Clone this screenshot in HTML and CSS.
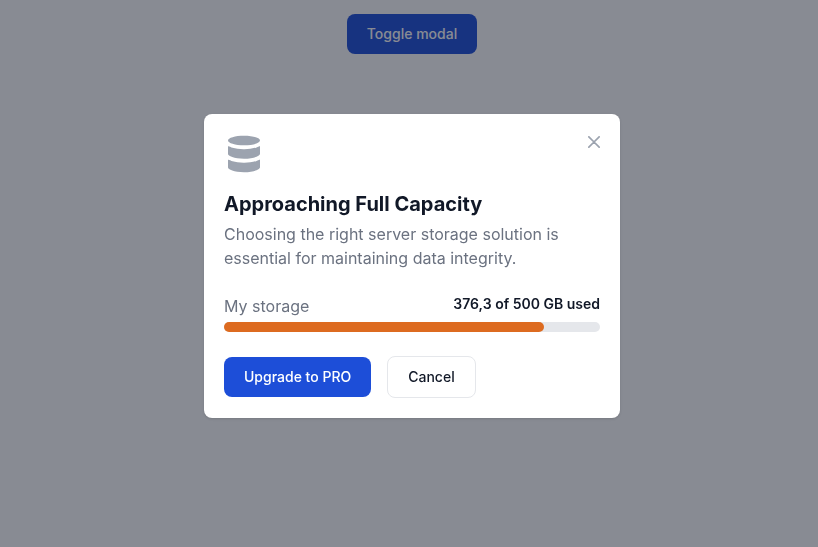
FILE: index.html
```html
<!DOCTYPE html>
<html lang="en">
<head>
<meta charset="utf-8">
<title>Storage modal</title>
<link rel="stylesheet" href="styles.css">
</head>
<body>
<main class="page">
  <button class="btn btn-primary" type="button">Toggle modal</button>
</main>
<div class="backdrop">
  <section class="modal" role="dialog" aria-labelledby="modal-title">
    <button class="close" type="button" aria-label="Close">
      <svg width="12" height="12" viewBox="0 0 14 14" fill="none" stroke="currentColor" stroke-width="2" stroke-linecap="round" stroke-linejoin="round"><path d="m1 1 6 6m0 0 6 6M7 7l6-6M7 7l-6 6"/></svg>
    </button>
    <svg class="icon" viewBox="0 0 16 20" fill="currentColor"><path d="M8 5.625c4.418 0 8-1.063 8-2.375S12.418.875 8 .875 0 1.938 0 3.25s3.582 2.375 8 2.375Zm0 13.5c4.963 0 8-1.538 8-2.375v-4.019c-.052.029-.112.054-.165.082a8.08 8.08 0 0 1-.745.353c-.193.081-.394.158-.6.231l-.189.067c-2.04.628-4.165.936-6.3.911a20.601 20.601 0 0 1-6.3-.911l-.189-.067a10.719 10.719 0 0 1-.852-.34 8.08 8.08 0 0 1-.493-.244c-.053-.028-.113-.053-.165-.082v4.019C0 17.587 3.037 19.125 8 19.125Zm7.09-12.709c-.193.081-.394.158-.6.231l-.189.067a20.6 20.6 0 0 1-6.3.911 20.6 20.6 0 0 1-6.3-.911l-.189-.067a10.719 10.719 0 0 1-.852-.34 8.08 8.08 0 0 1-.493-.244C.112 6.035.052 6.01 0 5.981V10c0 .837 3.037 2.375 8 2.375s8-1.538 8-2.375V5.981c-.052.029-.112.054-.165.082a8.08 8.08 0 0 1-.745.353Z"/></svg>
    <h2 class="title" id="modal-title">Approaching Full Capacity</h2>
    <p class="text">Choosing the right server storage solution is essential for maintaining data integrity.</p>
    <div class="usage">
      <span class="usage-name">My storage</span>
      <span class="usage-value">376,3 of 500 GB used</span>
    </div>
    <div class="track"><div class="bar" style="width:85%"></div></div>
    <div class="actions">
      <button class="btn btn-primary" type="button">Upgrade to PRO</button>
      <button class="btn btn-light" type="button">Cancel</button>
    </div>
  </section>
</div>
</body>
</html>
```
FILE: styles.css
```css
* { box-sizing: border-box; margin: 0; }
body {
  font: 400 16px/24px Inter, sans-serif;
  color: #6b7280;
  background: #fff;
}
.page {
  display: flex;
  justify-content: center;
  padding: 14px 0 0 6px;
}
.btn {
  font: 500 14px/20px Inter, sans-serif;
  padding: 10px 20px;
  border: 0;
  border-radius: 8px;
}
.btn-primary { color: #fff; background: #1d4ed8; }
.btn-light { color: #111827; background: #fff; border: 1px solid #e5e7eb; }
.backdrop {
  position: fixed;
  inset: 0;
  display: flex;
  justify-content: center;
  align-items: flex-start;
  padding: 114px 0 0 6px;
  background: rgba(17, 24, 39, 0.5);
}
.modal {
  position: relative;
  width: 416px;
  height: 304px;
  padding: 20px;
  background: #fff;
  border-radius: 8px;
  box-shadow: 0 1px 3px rgba(0, 0, 0, 0.1), 0 1px 2px -1px rgba(0, 0, 0, 0.1);
}
.close {
  position: absolute;
  top: 12px;
  right: 10px;
  width: 32px;
  height: 32px;
  padding: 0;
  display: flex;
  justify-content: center;
  align-items: center;
  border: 0;
  background: transparent;
  color: #9ca3af;
}
.icon { display: block; width: 40px; height: 40px; color: #9ca3af; }
.title {
  margin: 16px 0 4px;
  font-size: 20px;
  line-height: 28px;
  font-weight: 700;
  color: #111827;
}
.usage {
  display: flex;
  justify-content: space-between;
  margin: 24px 0 4px;
}
.usage-value { font-size: 14px; line-height: 20px; font-weight: 600; color: #111827; }
.track { height: 10px; border-radius: 5px; background: #e5e7eb; }
.bar { height: 10px; border-radius: 5px; background: #dd6b20; }
.actions {
  display: flex;
  align-items: center;
  gap: 16px;
  margin-top: 24px;
}
```
